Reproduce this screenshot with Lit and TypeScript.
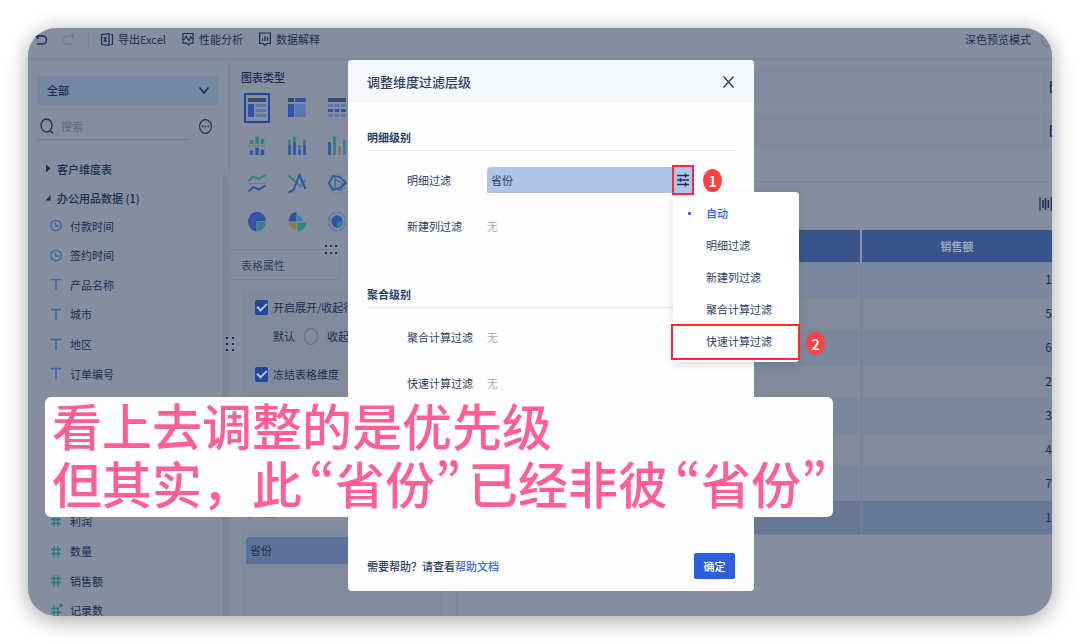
import { LitElement, html, css, svg } from "lit";
import { customElement } from "lit/decorators.js";
import { classMap } from "lit/directives/class-map.js";

const NAVY = "#1d2f55";
const BLUE = "#3253a8";
const SOFT = "#5b75ae";
const TEAL = "#357f86";
const CYAN = "#2f82b0";
const AMBER = "#8e7550";

const chartIcons = [
  svg`<rect x="0" y="0" width="18" height="4" fill="#3b4b66"/><rect x="0" y="6" width="6" height="13" fill=${BLUE}/><path d="M7.500 7.500h10.500M7.500 12.500h10.500M7.500 17.500h10.500" stroke=${SOFT} stroke-width="3"/>`,
  svg`<rect x="0" y="0" width="6" height="4" fill="#3b4b66"/><rect x="7" y="0" width="11" height="4" fill=${BLUE}/><rect x="0" y="6" width="6" height="13" fill=${BLUE}/><rect x="7" y="6" width="11" height="13" fill=${SOFT}/>`,
  svg`<rect x="0" y="0" width="18" height="4" fill="#3b4b66"/><path d="M0 7.500h5M6.500 7.500h5M13 7.500h5M0 17.500h5M6.500 17.500h5M13 17.500h5" stroke=${SOFT} stroke-width="3"/><path d="M0 12.500h5M6.500 12.500h5M13 12.500h5" stroke=${BLUE} stroke-width="3"/>`,
  svg`<path d="M3.500 8V4M9 8V0.500M14.500 8V3" stroke=${TEAL} stroke-width="3.500"/><path d="M0 9.800h18" stroke="#6c7b93"/><path d="M3.500 19v-4.500M9 19v-7.500M14.500 19v-5.500" stroke=${BLUE} stroke-width="3.500"/>`,
  svg`<path d="M1.500 9V3.500M6.500 6V0.500M11.500 14V9M16.500 9V3.500" stroke=${TEAL} stroke-width="2.600"/><path d="M1.500 19V9M6.500 19V6M11.500 19v-5M16.500 19V9" stroke=${BLUE} stroke-width="2.600"/>`,
  svg`<path d="M1.500 19V6" stroke=${BLUE} stroke-width="2.800"/><path d="M6.500 19V0.500" stroke=${TEAL} stroke-width="2.800"/><path d="M11.500 19v-9" stroke=${AMBER} stroke-width="2.800"/><path d="M16.500 19V4" stroke=${CYAN} stroke-width="2.800"/>`,
  svg`<path d="M0.500 7l5-4.500 5 2.500 7-4" stroke=${TEAL} stroke-width="2" fill="none"/><path d="M0 9.500h18" stroke="#6c7b93" stroke-width=".8"/><path d="M0.500 17.500l5-4.500 5 2.500 7-4" stroke=${BLUE} stroke-width="2" fill="none"/>`,
  svg`<path d="M0.500 1.500l12 11 5-7" stroke=${TEAL} stroke-width="2" fill="none"/><path d="M0.500 18.500l5-2.500 6-15 6 14" stroke=${BLUE} stroke-width="2" fill="none"/>`,
  svg`<ellipse cx="9" cy="9.500" rx="8.800" ry="9.800" stroke="#71819c" stroke-width=".8" fill="none"/><path d="M7 5l8 5-2 6-6-1z" stroke=${TEAL} stroke-width="1.800" fill="none"/><path d="M5 2l7 1 6 6-5 4-8 3-4-7z" stroke=${BLUE} stroke-width="1.800" fill="none"/>`,
  svg`<ellipse cx="9" cy="9.500" rx="9" ry="9.800" fill=${BLUE}/><path d="M9 9.500h9c0 5.500-4 9.800-9 9.800z" fill=${TEAL} stroke="#858e9e" stroke-width=".8"/>`,
  svg`<path d="M8.500 9.500V0C4 0 1 4 .800 9.500z" fill=${BLUE}/><path d="M9.500 9V3.500c3 0 5 2.500 5 5.500z" fill=${CYAN}/><path d="M8.500 10.500H0.800c0 4 3 7 7.700 7z" fill=${AMBER}/><path d="M9.500 10.500H18c0 5-4 9-8.500 9z" fill=${TEAL}/>`,
  svg`<ellipse cx="9" cy="9.500" rx="8.300" ry="9.200" stroke=${SOFT} stroke-width="1.500" fill="none" stroke-dasharray="12 1.500"/><ellipse cx="9" cy="9.500" rx="5.600" ry="6.200" fill=${BLUE}/><path d="M9 9.500h5.600c0 3.500-2.300 6.200-5.600 6.200z" fill=${TEAL}/>`,
];

const typeIcons: Record<string, unknown> = {
  time: svg`<circle cx="6" cy="6.500" r="5.200" fill="none" stroke="#3e62a8" stroke-width="1.300"/><path d="M5.500 3.500v3.500h3.500" fill="none" stroke="#3e62a8" stroke-width="1.300"/>`,
  text: svg`<path d="M1 1.500h10M6 1.500v10.500" fill="none" stroke="#3e62a8" stroke-width="1.400"/>`,
  num: svg`<path d="M4 1v11M8 1v11M1 4.500h10M1 8.500h10" fill="none" stroke="#2b7780" stroke-width="1.300"/>`,
  count: svg`<path d="M4 1v11M8 3v9M1 4.500h8M1 8.500h10" fill="none" stroke="#2b7780" stroke-width="1.300"/><circle cx="11" cy="1.500" r="1.700" fill="#2b7780"/>`,
};

type Field = { kind: string; label: string };
const fields: (Field | null)[] = [
  { kind: "time", label: "付款时间" },
  { kind: "time", label: "签约时间" },
  { kind: "text", label: "产品名称" },
  { kind: "text", label: "城市" },
  { kind: "text", label: "地区" },
  { kind: "text", label: "订单编号" },
  null,
  { kind: "num", label: "利润" },
  { kind: "num", label: "数量" },
  { kind: "num", label: "销售额" },
  { kind: "count", label: "记录数" },
];

const base = css`
  * { box-sizing: border-box; }
  button, input, select { font: inherit; color: inherit; margin: 0; padding: 0; border: 0; background: none; }
  ul { list-style: none; margin: 0; padding: 0; }
  h2, h3, p { margin: 0; font-size: inherit; font-weight: 500; }
  svg { display: block; flex: none; overflow: visible; }
`;

@customElement("top-bar")
class TopBar extends LitElement {
  static styles = [base, css`
    :host { display: flex; align-items: flex-start; height: 32px; padding: 3px 0 0 7px; border-bottom: 2px solid #7d8799; line-height: 16px; }
    button { display: flex; align-items: center; gap: 5px; height: 16px; }
    .undo { width: 28px; }
    .redo { width: 25px; color: #6c7990; }
    .sep { width: 1px; height: 20px; background: #7a8598; margin-right: 12px; }
    .tools { display: flex; gap: 16px; }
    .dark { margin-left: auto; display: flex; gap: 10px; align-items: center; }
    .switch { appearance: none; width: 22px; height: 16px; border: 1px solid #6c7990; border-radius: 8px; margin-right: -11px; }
  `];
  render() {
    return html`
      <button class="undo" aria-label="撤销"><svg width="12" height="14" viewBox="0 0 12 14" fill="none" stroke="currentColor" stroke-width="1.500"><path d="M3.500 1L1 4l2.500 3M1 4h7a3.500 4 0 0 1 0 8H2"/></svg></button>
      <button class="redo" aria-label="重做"><svg width="12" height="14" viewBox="0 0 12 14" fill="none" stroke="currentColor" stroke-width="1.200"><path d="M8.500 1L11 4 8.500 7M11 4H4a3.500 4 0 0 0 0 8h6"/></svg></button>
      <span class="sep"></span>
      <div class="tools">
        <button><svg width="12" height="13" viewBox="0 0 12 13" fill="none" stroke="currentColor" stroke-width="1.200"><path d="M8 .600L.600 1.500v10l7.400.900zM9.500 1.500h2v10h-2M2.800 4l3 5M5.800 4l-3 5"/></svg>导出Excel</button>
        <button><svg width="12" height="14" viewBox="0 0 13 14" fill="none" stroke="currentColor" stroke-width="1.200"><path d="M5 11.500H1V1h11v10.500H9M.500 7.500h2l2-3.500 3 5 2-4.500 1 2h2M5 11.500l2 2 2-2"/></svg>性能分析</button>
        <button><svg width="12" height="14" viewBox="0 0 12 14" fill="none" stroke="currentColor" stroke-width="1.200"><path d="M4 11.500H.600V1h10.800v10.500H8l-2 2zM3.500 9V6.500M6 9V4M8.500 9V5"/></svg>数据解释</button>
      </div>
      <label class="dark">深色预览模式<input class="switch" type="checkbox" /></label>`;
  }
}

@customElement("field-panel")
class FieldPanel extends LitElement {
  static styles = [base, css`
    :host { display: block; position: relative; width: 202px; flex: none; padding: 16px 11px 0 9px; border-right: 1px solid #7a8598; overflow: hidden; }
    .pick { position: relative; display: block; }
    .pick select { display: block; appearance: none; width: 100%; height: 29px; padding: 0 0 2px 10px; border-radius: 4px; background: #7587a2; font-weight: 500; }
    .pick svg { position: absolute; right: 9px; top: 11px; }
    .find { display: flex; align-items: center; justify-content: space-between; height: 35px; margin-right: 6px; }
    .box { display: flex; align-items: center; gap: 7px; width: 153px; height: 35px; padding: 8px 0 0 3px; border-bottom: 1px solid #6e7b90; }
    .box input { width: 100px; height: 16px; outline: 0; }
    .box input::placeholder { color: #5e6c83; opacity: 1; }
    .find button { padding-top: 8px; }
    .group { display: flex; align-items: center; gap: 6px; height: 29px; padding-left: 8px; font-weight: 500; }
    .groups { margin-top: 14px; }
    .fields { display: grid; grid-template-rows: repeat(14, 1fr); height: 414px; margin-top: -1px; padding-left: 13px; }
    .fields li { display: flex; align-items: center; gap: 8px; }
    .fields .gap { grid-row: span 4; }
    .bar { position: absolute; top: 115px; right: 1px; bottom: 0; width: 6px; border-radius: 3px 3px 0 0; background: #7b8597; }
  `];
  render() {
    return html`
      <label class="pick"><select aria-label="数据范围"><option>全部</option></select>
        <svg width="10" height="7" viewBox="0 0 10 7" fill="none" stroke=${NAVY} stroke-width="1.500"><path d="M.500.500L5 6 9.500.500"/></svg></label>
      <div class="find">
        <label class="box"><svg width="14" height="16" viewBox="0 0 14 16" fill="none" stroke=${NAVY} stroke-width="1.300"><ellipse cx="6.500" cy="7.500" rx="5.500" ry="6.500"/><path d="M10 12.500l3 3"/></svg><input placeholder="搜索" aria-label="搜索" /></label>
        <button aria-label="更多"><svg width="13" height="15" viewBox="0 0 13 15"><ellipse cx="6.500" cy="7.500" rx="5.900" ry="6.900" fill="none" stroke=${NAVY} stroke-width="1.100"/><path d="M3 7.500h1.500M5.800 7.500h1.500M8.600 7.500h1.500" stroke=${NAVY} stroke-width="1.500"/></svg></button>
      </div>
      <ul class="groups">
        <li class="group"><svg width="6" height="9" viewBox="0 0 6 9"><path d="M1 .500l4.500 4L1 8.500z" fill=${NAVY}/></svg>客户维度表</li>
        <li class="group"><svg width="6" height="7" viewBox="0 0 6 7"><path d="M5.500 1v5.500H.500z" fill=${NAVY}/></svg>办公用品数据 (1)</li>
      </ul>
      <ul class="fields">
        ${fields.map((f) => f
          ? html`<li><svg width="12" height="13" viewBox="0 0 12 13">${typeIcons[f.kind]}</svg>${f.label}</li>`
          : html`<li class="gap"></li>`)}
      </ul>
      <div class="bar"></div>`;
  }
}

@customElement("chart-panel")
class ChartPanel extends LitElement {
  static styles = [base, css`
    :host { display: flex; flex-direction: column; position: relative; width: 228px; flex: none; border-right: 1px solid #7a8598; overflow: hidden; }
    h2 { height: 16px; line-height: 16px; margin: 9px 0 0 11px; }
    .types { display: grid; grid-template-columns: repeat(3, 40px); grid-auto-rows: 38px; margin: 4px 0 8px 7px; }
    .types button { display: grid; place-items: center; width: 26px; height: 30px; align-self: center; justify-self: center; }
    .types .on { border: 2px solid #2048a0; }
    .tab { width: 110px; height: 31px; padding-left: 11px; text-align: left; border: 1px solid #7a8598; border-left: 0; border-radius: 0 0 4px 0; color: #33435f; }
    .hold { position: absolute; left: 95px; top: 184px; }
    .card { margin: 9px 16px 0 11px; background: #808a9b; }
    .opts { height: 215px; padding: 9px 0 0 14px; }
    .line { display: flex; align-items: center; gap: 5px; height: 18px; white-space: nowrap; }
    .sub { gap: 9px; margin: 11px 0 20px 18px; }
    .check { appearance: none; display: grid; place-items: center; width: 13px; height: 15px; background: #2048a0; border-radius: 2px; }
    .check::after { content: ""; width: 8px; height: 4px; margin-top: -3px; border: solid #b5bfd2; border-width: 0 0 2px 2px; transform: rotate(-45deg); }
    .radio { appearance: none; width: 14px; height: 17px; border: 1px solid #5f6c83; border-radius: 50%; }
    .dim { height: 16px; line-height: 16px; margin: 0 0 0 11px; color: #5e6c83; }
    .shelf { flex: 1; padding: 8px 0 0 5px; }
    .chip { height: 27px; line-height: 26px; padding-left: 4px; border-radius: 4px 0 0 0; background: #5c7298; }
  `];
  render() {
    return html`
      <h2>图表类型</h2>
      <div class="types">
        ${chartIcons.map((icon, i) => html`<button class=${classMap({ on: i === 0 })} aria-label="图表 ${i + 1}"><svg width="18" height="20" viewBox="0 0 18 20" fill="none">${icon}</svg></button>`)}
      </div>
      <svg class="hold" width="12" height="10" viewBox="0 0 12 10" fill=${NAVY}><path d="M0 1h2v2H0zM5 1h2v2H5zM10 1h2v2h-2zM0 8h2v2H0zM5 8h2v2H5zM10 8h2v2h-2z"/></svg>
      <button class="tab">表格属性</button>
      <div class="card opts">
        <label class="line"><input class="check" type="checkbox" checked />开启展开/收起行</label>
        <div class="line sub">默认<input class="radio" type="radio" id="fold" name="fold" /><label for="fold">收起</label></div>
        <label class="line"><input class="check" type="checkbox" checked />冻结表格维度</label>
      </div>
      <p class="dim">行维度</p>
      <div class="card shelf"><div class="chip">省份</div></div>`;
  }
}

@customElement("data-view")
class DataView extends LitElement {
  static styles = [base, css`
    :host { display: flex; flex-direction: column; flex: 1; min-width: 0; overflow: hidden; }
    .band { display: flex; justify-content: flex-end; align-items: center; height: 35px; margin: 9px 0 0 20px; background: #808a9b; }
    .band span { display: flex; align-items: center; height: 100%; width: 12px; padding-left: 9px; border-left: 1px solid #8690a1; }
    .cut { overflow: hidden; }
    .tools { display: flex; justify-content: flex-end; align-items: center; height: 49px; margin-top: 33px; border-top: 1px solid #7a8598; padding-bottom: 5px; }
    table { width: 100%; border-collapse: collapse; table-layout: fixed; }
    th, td { height: 34px; padding: 0; border-left: 1px solid #75819a; border-bottom: 1px solid #7a8599; }
    th { height: 32px; background: #38548a; color: #9ba7bd; font-weight: 700; border-left: 2px solid #8893a6; }
    th:first-child, td:first-child { border-left: 0; }
    td { background: #808a9b; text-align: right; font-size: 12px; }
    tr:nth-child(odd) td { background: #7b879f; }
    tr:last-child td { background: #687995; }
    .val { width: 191px; }
  `];
  render() {
    const cut = () => html`<span><svg class="cut" width="3" height="12" viewBox="0 0 3 12"><path d="M5 1H.700v10H5M.700 4.500H5" fill="none" stroke=${NAVY} stroke-width="1.400"/></svg></span>`;
    return html`
      <div class="band">${cut()}</div>
      <div class="band">${cut()}</div>
      <div class="tools"><svg width="13" height="14" viewBox="0 0 13 14" fill="none" stroke=${NAVY}><path d="M1 0v14M12.300 0v14" stroke-width="1.200"/><path d="M4 3v8M6.500 1v12M9.300 3v8" stroke-width="1.600"/></svg></div>
      <table>
        <colgroup><col /><col class="val" /></colgroup>
        <thead><tr><th></th><th>销售额</th></tr></thead>
        <tbody>${["1", "5", "6", "2", "3", "4", "7", "1"].map((v) => html`<tr><td></td><td>${v}</td></tr>`)}</tbody>
      </table>`;
  }
}

@customElement("filter-dialog")
class FilterDialog extends LitElement {
  static styles = [base, css`
    :host { display: flex; flex-direction: column; background: #fefefe; border-radius: 4px; color: #2c3e63; }
    header { display: flex; align-items: center; justify-content: space-between; height: 43px; padding: 0 20px 0 19px; border-radius: 4px 4px 0 0; background: #f7f8fd; }
    header h2 { font-size: 13px; }
    .body { padding: 21px 19px 0; }
    h3 { height: 27px; line-height: 26px; border-bottom: 1px solid #e4e8f0; font-weight: 700; }
    section + section { margin-top: 42px; }
    dl { display: grid; row-gap: 20px; margin: 16px 0 0; }
    .row { display: grid; grid-template-columns: 80px 1fr; align-items: center; height: 26px; padding-left: 40px; }
    dd { margin: 0; }
    .none { color: #a5acb9; }
    .chip { position: relative; display: flex; align-items: center; justify-content: space-between; width: 207px; height: 26px; padding-left: 4px; border-radius: 4px 0 0 0; background: #afc4e8; }
    .order { position: relative; z-index: 2; display: grid; place-items: center; width: 22px; height: 30px; border: 2px solid #fa2a31; background: #afc4e8; }
    .mark { position: absolute; display: grid; place-items: center; width: 19px; height: 23px; border-radius: 50%; background: #ff4245; color: #fff; font-size: 15px; line-height: 20px; font-weight: 500; }
    .one { left: 216px; top: 2px; }
    .two { left: 133px; top: 7px; }
    .menu { position: absolute; left: 186px; top: 25px; z-index: 1; width: 126px; padding: 5px 0; border-radius: 4px; background: #fff; box-shadow: 0 3px 10px rgba(30, 50, 90, .16); }
    .menu li { position: relative; }
    .menu button { display: block; width: 100%; height: 32px; padding-left: 33px; text-align: left; }
    .menu .on { color: #2f62e0; font-weight: 500; }
    .menu .on::before { content: ""; position: absolute; left: 15px; top: 15px; width: 3px; height: 3px; background: #2f62e0; border-radius: 1px; }
    .ring { position: absolute; inset: -1px -1px -3px -2px; border: 2px solid #fa2a31; pointer-events: none; }
    footer { display: flex; align-items: center; justify-content: space-between; margin-top: auto; padding: 0 19px 12px; }
    a { color: #3b6ae0; text-decoration: none; }
    .ok { width: 41px; height: 26px; border-radius: 2px; background: #2b5fdc; color: #fff; font-weight: 500; }
  `];
  render() {
    const items = ["自动", "明细过滤", "新建列过滤", "聚合计算过滤", "快速计算过滤"];
    const last = items.length - 1;
    return html`
      <header><h2>调整维度过滤层级</h2>
        <button aria-label="关闭"><svg width="11" height="12" viewBox="0 0 11 12" stroke="#2c3e63" stroke-width="1.400"><path d="M.500.500l10 11M10.500.500L.500 11.500"/></svg></button></header>
      <div class="body">
        <section><h3>明细级别</h3><dl>
          <div class="row"><dt>明细过滤</dt><dd class="chip">省份
            <button class="order" aria-label="调整层级"><svg width="12" height="14" viewBox="0 0 12 14" fill="none" stroke="#1d2f55" stroke-width="1.400"><path d="M0 2.500h12M0 7h12M0 11.500h12M8.500.500v4M3.500 5v4M8.500 9.500v4"/></svg></button>
            <span class="mark one">1</span>
            <ul class="menu">
              ${items.map((t, i) => html`<li><button class=${classMap({ on: i === 0 })}>${t}</button>${i === last ? html`<span class="ring"></span><span class="mark two">2</span>` : null}</li>`)}
            </ul></dd></div>
          <div class="row"><dt>新建列过滤</dt><dd class="none">无</dd></div>
        </dl></section>
        <section><h3>聚合级别</h3><dl>
          <div class="row"><dt>聚合计算过滤</dt><dd class="none">无</dd></div>
          <div class="row"><dt>快速计算过滤</dt><dd class="none">无</dd></div>
        </dl></section>
      </div>
      <footer><p>需要帮助？请查看<a href="#help">帮助文档</a></p><button class="ok">确定</button></footer>`;
  }
}

@customElement("app-root")
class AppRoot extends LitElement {
  static styles = [base, css`
    :host { display: block; box-sizing: border-box; height: 100vh; padding: 28px; background: #fff; font: 11px/16px "Noto Sans CJK SC", sans-serif; color: #1d2f55; }
    .frame { position: relative; display: flex; flex-direction: column; height: 100%; border-radius: 28px; background: #858e9e; box-shadow: 0 4px 22px rgba(0, 0, 0, .36); }
    .screen { display: flex; flex-direction: column; flex: 1; min-height: 0; border-radius: 28px; overflow: hidden; }
    .work { display: flex; flex: 1; min-height: 0; }
    .grip { position: absolute; left: 197px; top: 308px; }
    .dialog { position: absolute; left: 320px; top: 32px; bottom: 25px; width: 406px; }
    .caption { position: absolute; left: 17px; top: 369px; z-index: 2; height: 120px; padding: 0 6px 0 7px; border-radius: 6px; background: #fefefe; color: #ff5f96; white-space: nowrap; }
    .caption p { margin-top: -2px; font-size: 50px; line-height: 58px; font-weight: 500; }
    .open, .shut { font-family: "Noto Sans CJK KR", sans-serif; }
    .open { margin-left: 7px; }
    .shut { margin-right: 7px; }
    .shut:last-child { margin-right: 0; }
  `];
  render() {
    return html`
      <main class="frame">
        <div class="screen">
          <top-bar></top-bar>
          <div class="work"><field-panel></field-panel><chart-panel></chart-panel><data-view></data-view></div>
        </div>
        <svg class="grip" width="9" height="15" viewBox="0 0 9 15" fill=${NAVY}><path d="M1 1h2v2H1zM7 1h2v2H7zM1 7h2v2H1zM7 7h2v2H7zM1 13h2v2H1zM7 13h2v2H7z"/></svg>
        <filter-dialog class="dialog" role="dialog" aria-label="调整维度过滤层级"></filter-dialog>
        <div class="caption"><p>看上去调整的是优先级<br />但其实，此<span class="open" lang="ko">“</span>省份<span class="shut" lang="ko">”</span>已经非彼<span class="open" lang="ko">“</span>省份<span class="shut" lang="ko">”</span></p></div>
      </main>`;
  }
}
